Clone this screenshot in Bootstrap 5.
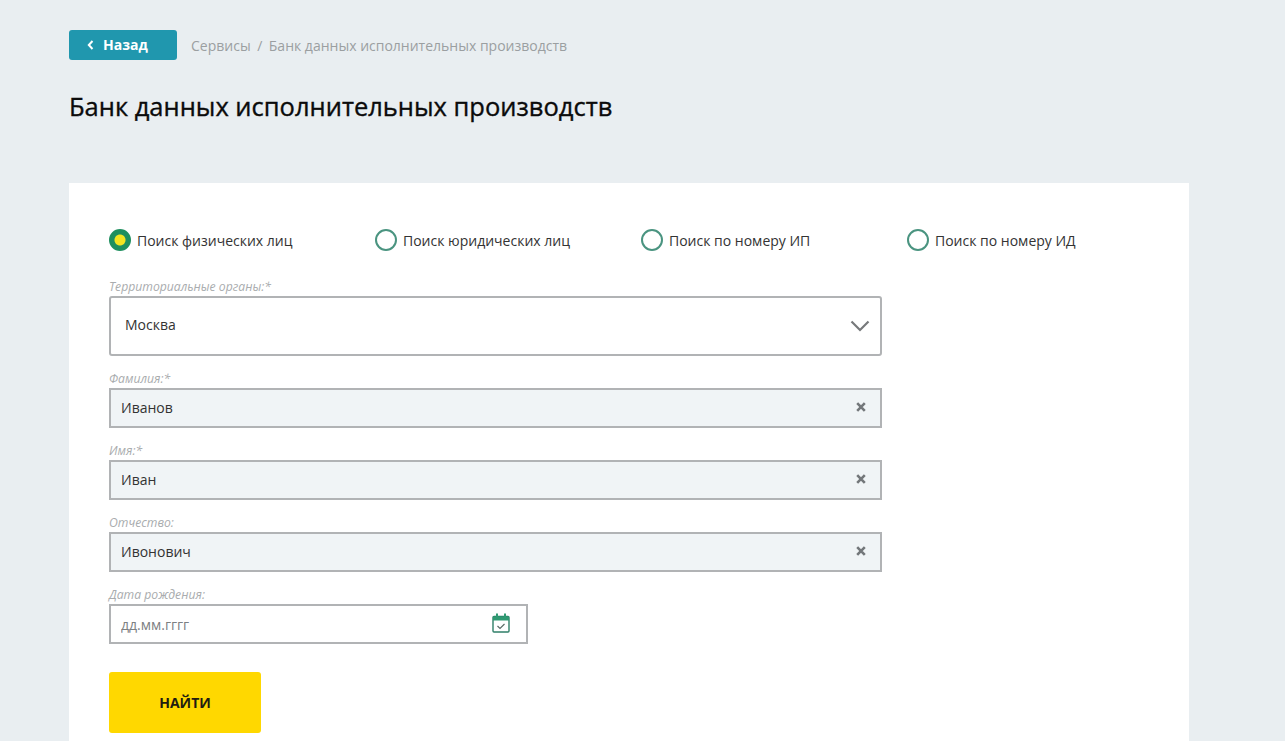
<!DOCTYPE html>
<html lang="ru">

<head>
    <meta charset="UTF-8">
    <meta name="viewport" content="width=device-width, initial-scale=1.0">
    <title>Банк данных исполнительных производств</title>
    <link href="https://cdn.jsdelivr.net/npm/bootstrap@5.3.0/dist/css/bootstrap.min.css" rel="stylesheet">
    <style>
        html, body {
            height: 741px;
            overflow: hidden;
        }

        body {
            background-color: #e9eef1;
            font-family: "Open Sans", "Liberation Sans", sans-serif;
            color: #222;
        }

        .page-wrap {
            padding: 30px 96px 0 69px;
        }

        .btn-back {
            width: 108px;
            height: 30px;
            padding: 0 0 0 18px;
            background-color: #2097ae;
            border: 0;
            border-radius: 3px;
            color: #fff;
            font-size: 14px;
            font-weight: 700;
            line-height: 30px;
            gap: 9px;
        }

        .crumbs {
            margin-left: 14px;
            font-size: 14px;
            color: #9b9fa1;
            gap: 6.5px;
        }

        .page-title {
            margin: 30px 0 61px;
            font-family: "Open Sans", "Liberation Sans", sans-serif;
            font-size: 25.5px;
            font-weight: 400;
            -webkit-text-stroke: 0.35px #0b0b0b;
            line-height: 32px;
            color: #0b0b0b;
        }

        .search-card {
            padding: 45px 40px 60px;
            background: #fff;
            border: 0;
            border-radius: 0;
        }

        .radio-row {
            margin-bottom: 27px;
            height: 24px;
        }

        .radio-item {
            flex: none;
            width: 266px;
            gap: 6px;
            margin: 0;
            padding: 0;
            font-size: 14px;
            color: #333;
        }

        .radio-item .form-check-input {
            float: none;
            flex: none;
            width: 22px;
            height: 22px;
            margin: 0;
            border: 2px solid #4a9480;
            border-radius: 50%;
            background-color: #fff;
        }

        .radio-item .form-check-input:checked {
            border-color: #1f8f5f;
            background: radial-gradient(circle, #f4e421 0 5px, #1f8f5f 6px);
        }

        .field-label {
            display: block;
            margin: 0 0 2px;
            height: 15px;
            font-size: 12.2px;
            font-style: italic;
            line-height: 15px;
            color: #a9acae;
        }

        .field-box {
            width: 773px;
            margin-bottom: 15px;
        }

        .field-date {
            width: 419px;
            margin-bottom: 28px;
        }

        .search-card .form-control,
        .search-card .form-select {
            height: 40px;
            padding: 0 40px 2px 10px;
            border: 2px solid #b1b3b5;
            border-radius: 0;
            background-color: #f0f4f6;
            font-size: 14px;
            color: #333;
            box-shadow: none;
        }

        .search-card .form-select {
            height: 60px;
            padding-left: 14px;
            padding-bottom: 3px;
            border-radius: 3px;
            background-color: #fff;
            background-image: none;
            appearance: none;
        }

        .search-card .field-date .form-control {
            padding-bottom: 0;
            background-color: #fff;
        }

        .search-card .field-date .form-control::placeholder {
            color: #7d8082;
            opacity: 1;
        }

        .field-icon {
            position: absolute;
            top: 50%;
            transform: translateY(-50%);
            pointer-events: none;
        }

        .icon-clear {
            right: 16px;
            margin-top: -1px;
        }

        .icon-chevron {
            right: 12px;
        }

        .icon-calendar {
            right: 18px;
            margin-top: -1px;
        }

        .btn-find {
            width: 152px;
            height: 61px;
            padding: 0;
            background-color: #ffd800;
            border: 0;
            border-radius: 3px;
            color: #221c10;
            font-size: 14px;
            font-weight: 700;
        }
    </style>
</head>

<body>
    <div class="page-wrap">
        <div class="d-flex align-items-center">
            <a href="#" class="btn btn-back d-inline-flex align-items-center">
                <svg width="7" height="10" viewBox="0 0 7 10"><path d="M5.5 1 L1.8 5 L5.5 9" fill="none" stroke="#fff" stroke-width="2"/></svg>
                Назад
            </a>
            <div class="crumbs d-flex">
                <span>Сервисы</span><span>/</span><span>Банк данных исполнительных производств</span>
            </div>
        </div>

        <h1 class="page-title">Банк данных исполнительных производств</h1>

        <form class="card search-card">
            <div class="radio-row d-flex align-items-center">
                <label class="radio-item form-check d-flex align-items-center">
                    <input class="form-check-input" type="radio" name="kind" checked>
                    <span>Поиск физических лиц</span>
                </label>
                <label class="radio-item form-check d-flex align-items-center">
                    <input class="form-check-input" type="radio" name="kind">
                    <span>Поиск юридических лиц</span>
                </label>
                <label class="radio-item form-check d-flex align-items-center">
                    <input class="form-check-input" type="radio" name="kind">
                    <span>Поиск по номеру ИП</span>
                </label>
                <label class="radio-item form-check d-flex align-items-center">
                    <input class="form-check-input" type="radio" name="kind">
                    <span>Поиск по номеру ИД</span>
                </label>
            </div>

            <div class="field-box">
                <label class="field-label">Территориальные органы:*</label>
                <div class="position-relative">
                    <select class="form-select">
                        <option selected>Москва</option>
                    </select>
                    <svg class="field-icon icon-chevron" width="20" height="12" viewBox="0 0 20 12"><path d="M1.5 1.5 L10 10 L18.5 1.5" fill="none" stroke="#77797b" stroke-width="2.2"/></svg>
                </div>
            </div>

            <div class="field-box">
                <label class="field-label">Фамилия:*</label>
                <div class="position-relative">
                    <input type="text" class="form-control" value="Иванов">
                    <svg class="field-icon icon-clear" width="10" height="10" viewBox="0 0 10 10"><path d="M1.2 1.2 L8.8 8.8 M8.8 1.2 L1.2 8.8" stroke="#73777a" stroke-width="2.6"/></svg>
                </div>
            </div>

            <div class="field-box">
                <label class="field-label">Имя:*</label>
                <div class="position-relative">
                    <input type="text" class="form-control" value="Иван">
                    <svg class="field-icon icon-clear" width="10" height="10" viewBox="0 0 10 10"><path d="M1.2 1.2 L8.8 8.8 M8.8 1.2 L1.2 8.8" stroke="#73777a" stroke-width="2.6"/></svg>
                </div>
            </div>

            <div class="field-box">
                <label class="field-label">Отчество:</label>
                <div class="position-relative">
                    <input type="text" class="form-control" value="Ивонович">
                    <svg class="field-icon icon-clear" width="10" height="10" viewBox="0 0 10 10"><path d="M1.2 1.2 L8.8 8.8 M8.8 1.2 L1.2 8.8" stroke="#73777a" stroke-width="2.6"/></svg>
                </div>
            </div>

            <div class="field-date">
                <label class="field-label">Дата рождения:</label>
                <div class="position-relative">
                    <input type="text" class="form-control" placeholder="дд.мм.гггг">
                    <svg class="field-icon icon-calendar" width="18" height="20" viewBox="0 0 18 20">
                        <rect x="1" y="3.5" width="16" height="15.5" rx="1" fill="none" stroke="#2f7f68" stroke-width="1.4"/>
                        <rect x="1" y="3.5" width="16" height="4" fill="#2f9a72"/>
                        <path d="M5 0.5 V4 M13 0.5 V4" stroke="#2f9a72" stroke-width="2"/>
                        <path d="M5.5 13 L8 15.5 L12.5 11" fill="none" stroke="#5b6b66" stroke-width="1.2"/>
                    </svg>
                </div>
            </div>

            <div>
                <button type="button" class="btn btn-find">НАЙТИ</button>
            </div>
        </form>
    </div>

    <script src="https://cdn.jsdelivr.net/npm/bootstrap@5.3.0/dist/js/bootstrap.bundle.min.js"></script>
</body>

</html>
